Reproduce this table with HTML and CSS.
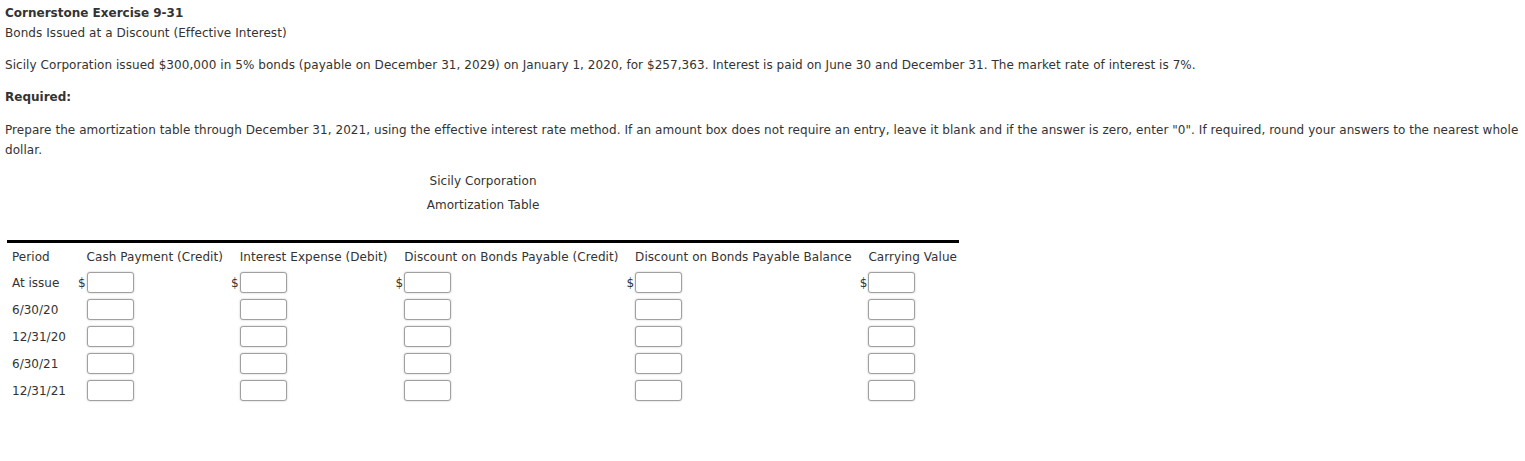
FILE: index.html
```html
<!DOCTYPE html>
<html>
<head>
<meta charset="utf-8">
<link rel="stylesheet" href="styles.css">
</head>
<body>
<div class="page">
  <h1 class="title">Cornerstone Exercise 9-31</h1>
  <p class="subtitle">Bonds Issued at a Discount (Effective Interest)</p>
  <p class="para">Sicily Corporation issued $300,000 in 5% bonds (payable on December 31, 2029) on January 1, 2020, for $257,363. Interest is paid on June 30 and December 31. The market rate of interest is 7%.</p>
  <h2 class="req">Required:</h2>
  <p class="para instr">Prepare the amortization table through December 31, 2021, using the effective interest rate method. If an amount box does not require an entry, leave it blank and if the answer is zero, enter "0". If required, round your answers to the nearest whole dollar.</p>

  <div class="tablewrap">
    <div class="caption">
      <div class="cap1">Sicily Corporation</div>
      <div class="cap2">Amortization Table</div>
    </div>
    <table class="amort">
      <thead>
        <tr>
          <th class="period">Period</th>
          <th class="sign"></th>
          <th>Cash Payment (Credit)</th>
          <th class="sign"></th>
          <th>Interest Expense (Debit)</th>
          <th class="sign"></th>
          <th>Discount on Bonds Payable (Credit)</th>
          <th class="sign"></th>
          <th>Discount on Bonds Payable Balance</th>
          <th class="sign"></th>
          <th class="last">Carrying Value</th>
        </tr>
      </thead>
      <tbody>
        <tr>
          <td class="period">At issue</td>
          <td class="sign">$</td><td><input class="box" type="text"></td>
          <td class="sign">$</td><td><input class="box" type="text"></td>
          <td class="sign">$</td><td><input class="box" type="text"></td>
          <td class="sign">$</td><td><input class="box" type="text"></td>
          <td class="sign">$</td><td><input class="box" type="text"></td>
        </tr>
        <tr>
          <td class="period">6/30/20</td>
          <td class="sign"></td><td><input class="box" type="text"></td>
          <td class="sign"></td><td><input class="box" type="text"></td>
          <td class="sign"></td><td><input class="box" type="text"></td>
          <td class="sign"></td><td><input class="box" type="text"></td>
          <td class="sign"></td><td><input class="box" type="text"></td>
        </tr>
        <tr>
          <td class="period">12/31/20</td>
          <td class="sign"></td><td><input class="box" type="text"></td>
          <td class="sign"></td><td><input class="box" type="text"></td>
          <td class="sign"></td><td><input class="box" type="text"></td>
          <td class="sign"></td><td><input class="box" type="text"></td>
          <td class="sign"></td><td><input class="box" type="text"></td>
        </tr>
        <tr>
          <td class="period">6/30/21</td>
          <td class="sign"></td><td><input class="box" type="text"></td>
          <td class="sign"></td><td><input class="box" type="text"></td>
          <td class="sign"></td><td><input class="box" type="text"></td>
          <td class="sign"></td><td><input class="box" type="text"></td>
          <td class="sign"></td><td><input class="box" type="text"></td>
        </tr>
        <tr>
          <td class="period">12/31/21</td>
          <td class="sign"></td><td><input class="box" type="text"></td>
          <td class="sign"></td><td><input class="box" type="text"></td>
          <td class="sign"></td><td><input class="box" type="text"></td>
          <td class="sign"></td><td><input class="box" type="text"></td>
          <td class="sign"></td><td><input class="box" type="text"></td>
        </tr>
      </tbody>
    </table>
  </div>
</div>
</body>
</html>
```

FILE: styles.css
```css
html, body {
  margin: 0;
  padding: 0;
  background: #ffffff;
}
body {
  font-family: "DejaVu Sans", Verdana, sans-serif;
  font-size: 12px;
  letter-spacing: 0.06px;
  color: #333333;
}
.page {
  padding: 6px 0 0 5px;
}
.title {
  font-size: 12px;
  font-weight: bold;
  letter-spacing: 0;
  margin: 0;
  line-height: 15px;
}
.subtitle {
  margin: 5px 0 0 0;
  line-height: 15px;
}
.para {
  margin: 14px 0 0 0;
  line-height: 20px;
}
.req {
  font-size: 12px;
  font-weight: bold;
  letter-spacing: 0;
  margin: 15px 0 0 0;
  line-height: 15px;
}
.instr {
  margin-top: 15px;
}
.tablewrap {
  display: inline-block;
  margin: 11px 0 0 2px;
}
.caption {
  text-align: center;
}
.cap1 {
  line-height: 20px;
}
.cap2 {
  margin-top: 4px;
  line-height: 20px;
  margin-bottom: 25px;
}
.amort {
  border-collapse: collapse;
  border-top: 3px solid #000000;
  letter-spacing: 0;
}
.amort th {
  font-weight: normal;
  text-align: left;
  padding: 7px 8px 4px 0;
  white-space: nowrap;
  line-height: 15px;
  letter-spacing: 0.06px;
}
.amort th.last {
  padding-right: 2px;
}
.amort td {
  padding: 3px 0 3px 0;
  height: 21px;
  white-space: nowrap;
}
.amort .period {
  padding-left: 5px;
  padding-right: 12px;
}
.amort .sign {
  padding: 0 1px 0 0;
  text-align: right;
  width: 6px;
}
.box {
  width: 47px;
  height: 21px;
  box-sizing: border-box;
  border: 1px solid #a0a0a0;
  border-radius: 3px;
  box-shadow: 0 0 2px rgba(0,0,0,0.25);
  padding: 0 2px;
  margin: 0;
  font: inherit;
  vertical-align: middle;
  background: #ffffff;
}
```
